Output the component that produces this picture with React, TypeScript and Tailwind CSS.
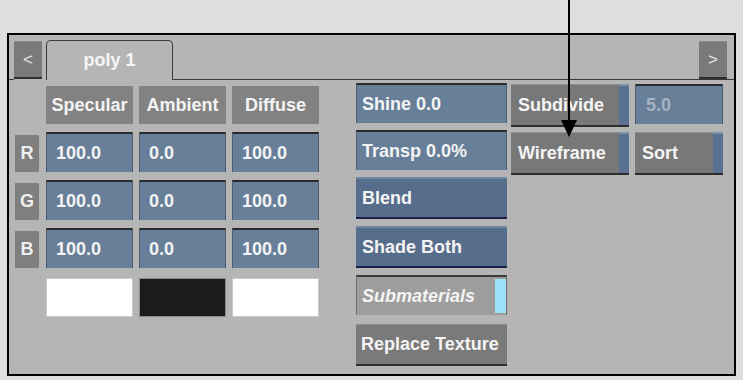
const font = { fontFamily: '"Liberation Sans", Arial, sans-serif' };

function Field({ text, w, pad = 'pl-[9px]', dim }: { text: string; w: string; pad?: string; dim?: boolean }) {
  return (
    <div
      className={`${w} ${pad} h-[40px] flex items-center bg-[#677f99] border-t-2 border-t-[#2b2b2b] border-x border-x-[#4e5d6e] text-[18px] font-bold ${
        dim ? 'text-[#a7b3c3]' : 'text-[#f4f4f4]'
      }`}
    >
      {text}
    </div>
  );
}

function Header({ text }: { text: string }) {
  return (
    <div className="w-[87px] h-[38px] flex items-center justify-center bg-[#828282] text-[18px] font-bold text-[#f4f4f4]">
      {text}
    </div>
  );
}

function Label({ text }: { text: string }) {
  return (
    <div className="w-[24px] h-[37px] self-end flex items-center justify-center bg-[#7f7f7f] text-[18px] font-bold text-[#f0f0f0]">
      {text}
    </div>
  );
}

function BlueButton({ text }: { text: string }) {
  return (
    <div className="w-[151px] h-[42px] flex items-center pl-[6px] bg-[#566d8b] border-t-2 border-t-[#7188a5] border-b-2 border-b-[#1d1f4a] text-[18px] font-bold text-[#f4f4f4]">
      {text}
    </div>
  );
}

function StripButton({ text, w }: { text: string; w: string }) {
  return (
    <div className={`${w} h-[43px] flex bg-[#787878] border-b-2 border-b-[#2e2e2e]`}>
      <div className="flex-1 flex items-center pl-[7px] border-t border-t-[#8e8e8e] text-[18px] font-bold text-[#f4f4f4]">
        {text}
      </div>
      <div className="w-[10px] bg-[#5a7292] border-t-2 border-t-[#7b93b2]" />
    </div>
  );
}

export default function App() {
  const rows = [
    ['R', '100.0', '0.0', '100.0'],
    ['G', '100.0', '0.0', '100.0'],
    ['B', '100.0', '0.0', '100.0'],
  ];

  return (
    <div className="relative w-[743px] h-[380px] bg-[#dedede] pt-[33px] pl-[7px] overflow-hidden" style={font}>
      <div className="w-[729px] h-[343px] border-2 border-black bg-[#b5b5b5] flex flex-col">
        {/* Tab strip */}
        <div className="flex h-[45px] shrink-0">
          <div className="w-[5px] border-b border-b-[#3a3a3a]" />
          <div className="pt-[6px] pr-[4px]">
            <div className="w-[28px] h-[38px] flex items-center justify-center bg-[#7a7a7a] border-t border-t-[#8c8c8c] border-b-2 border-b-[#2f2f2f] text-[17px] text-[#e6e6e6]">
              &lt;
            </div>
          </div>
          <div className="mt-[5px] w-[127px] h-[40px] border-t border-x border-[#3a3a3a] rounded-t-[5px] flex items-center justify-center text-[18px] font-bold text-[#f6f6f6]">
            poly 1
          </div>
          <div className="flex-1 border-b border-b-[#3a3a3a] flex justify-end pr-[7px] pt-[6px]">
            <div className="w-[28px] h-[38px] flex items-center justify-center bg-[#7a7a7a] border-t border-t-[#8c8c8c] border-b-2 border-b-[#2f2f2f] text-[17px] text-[#e6e6e6]">
              &gt;
            </div>
          </div>
        </div>

        <div className="flex pl-[6px]">
          {/* Colour grid */}
          <div className="flex flex-col pt-[6px]">
            <div className="flex gap-[6px] pl-[31px]">
              <Header text="Specular" />
              <Header text="Ambient" />
              <Header text="Diffuse" />
            </div>
            <div className="flex flex-col gap-[8px] mt-[8px]">
              {rows.map((r) => (
                <div key={r[0]} className="flex">
                  <Label text={r[0]} />
                  <div className="flex gap-[6px] ml-[7px]">
                    <Field text={r[1]} w="w-[87px]" />
                    <Field text={r[2]} w="w-[87px]" />
                    <Field text={r[3]} w="w-[87px]" />
                  </div>
                </div>
              ))}
            </div>
            <div className="flex gap-[6px] pl-[31px] mt-[10px]">
              <div className="w-[87px] h-[39px] bg-white border border-[#c8c8c8]" />
              <div className="w-[87px] h-[39px] bg-[#1b1b1b] border border-[#8a8a8a]" />
              <div className="w-[87px] h-[39px] bg-white border border-[#c8c8c8]" />
            </div>
          </div>

          {/* Shading options */}
          <div className="flex flex-col gap-[7px] ml-[37px] pt-[3px]">
            <Field text="Shine 0.0" w="w-[151px]" pad="pl-[5px]" />
            <Field text="Transp 0.0%" w="w-[151px]" pad="pl-[5px]" />
            <BlueButton text="Blend" />
            <BlueButton text="Shade Both" />
            <div className="w-[151px] h-[40px] flex bg-[#9d9d9d] border-t-2 border-t-[#3a3a3a] border-x border-x-[#6e6e6e]">
              <div className="flex-1 flex items-center pl-[5px] text-[18px] font-bold italic text-[#f4f4f4]">
                Submaterials
              </div>
              <div className="w-[11px] my-[2px] bg-[#9fe2fb]" />
            </div>
            <div className="w-[151px] h-[42px] mt-[2px] flex items-center pl-[5px] bg-[#7a7a7a] border-t border-t-[#8c8c8c] border-b-2 border-b-[#2e2e2e] text-[18px] font-bold text-[#f4f4f4] whitespace-nowrap">
              Replace Texture
            </div>
          </div>

          {/* Geometry options */}
          <div className="flex flex-col gap-[5px] ml-[4px] pt-[4px]">
            <div className="flex gap-[6px]">
              <StripButton text="Subdivide" w="w-[118px]" />
              <Field text="5.0" w="w-[88px]" pad="pl-[10px]" dim />
            </div>
            <div className="flex gap-[6px]">
              <StripButton text="Wireframe" w="w-[118px]" />
              <StripButton text="Sort" w="w-[88px]" />
            </div>
          </div>
        </div>
      </div>

      {/* Callout arrow */}
      <div className="absolute left-[568px] top-0 w-[2px] h-[124px] bg-black" />
      <svg className="absolute left-[561px] top-[120px]" width="16" height="17" viewBox="0 0 16 17">
        <polygon points="0,0 16,0 8,17" fill="black" />
      </svg>
    </div>
  );
}
